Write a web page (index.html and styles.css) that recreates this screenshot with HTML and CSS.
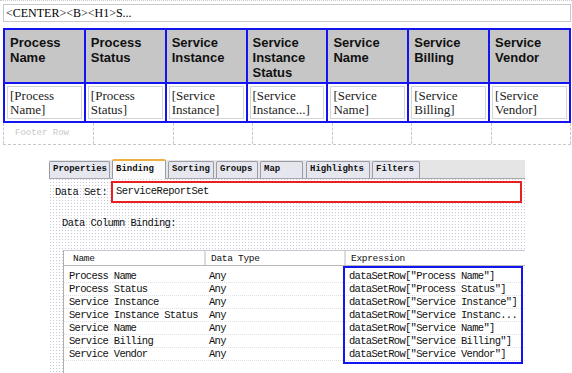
FILE: index.html
```html
<!DOCTYPE html>
<html lang="en">
  <head>
    <meta charset="UTF-8" />
    <title>Report Binding</title>
    <link rel="stylesheet" href="styles.css">
  </head>
  <body>
    <div class="layout">
      <div class="topbar">&lt;CENTER&gt;&lt;B&gt;&lt;H1&gt;S...</div>

      <table class="report">
        <tr class="head">
          <th>Process Name</th>
          <th>Process Status</th>
          <th>Service Instance</th>
          <th>Service Instance Status</th>
          <th>Service Name</th>
          <th>Service Billing</th>
          <th>Service Vendor</th>
        </tr>
        <tr class="data">
          <td><span>[Process Name]</span></td>
          <td><span>[Process Status]</span></td>
          <td><span>[Service Instance]</span></td>
          <td><span>[Service Instance...]</span></td>
          <td><span>[Service Name]</span></td>
          <td><span>[Service Billing]</span></td>
          <td><span>[Service Vendor]</span></td>
        </tr>
      </table>
      <div class="footer">
        <div class="fcell first">Footer Row</div>
        <div class="fcell"></div>
        <div class="fcell"></div>
        <div class="fcell"></div>
        <div class="fcell"></div>
        <div class="fcell"></div>
        <div class="fcell"></div>
      </div>

      <div class="panel">
        <div class="tabs">
          <div class="tab t-prop">Properties</div>
          <div class="tab active t-bind">Binding</div>
          <div class="tab t-sort">Sorting</div>
          <div class="tab t-group">Groups</div>
          <div class="tab t-map">Map</div>
          <div class="tab t-high">Highlights</div>
          <div class="tab t-filt">Filters</div>
        </div>

        <div class="dataset">
          <label>Data Set:</label>
          <div class="field">ServiceReportSet</div>
        </div>

        <div class="subtitle">Data Column Binding:</div>

        <div class="grid">
          <div class="grow ghead">
            <div class="c1">Name</div>
            <div class="c2">Data Type</div>
            <div class="c3">Expression</div>
          </div>
          <div class="gbody">
            <div class="grow"><div class="c1">Process Name</div><div class="c2">Any</div><div class="c3">dataSetRow["Process Name"]</div></div>
            <div class="grow"><div class="c1">Process Status</div><div class="c2">Any</div><div class="c3">dataSetRow["Process Status"]</div></div>
            <div class="grow"><div class="c1">Service Instance</div><div class="c2">Any</div><div class="c3">dataSetRow["Service Instance"]</div></div>
            <div class="grow"><div class="c1">Service Instance Status</div><div class="c2">Any</div><div class="c3">dataSetRow["Service Instanc...</div></div>
            <div class="grow"><div class="c1">Service Name</div><div class="c2">Any</div><div class="c3">dataSetRow["Service Name"]</div></div>
            <div class="grow"><div class="c1">Service Billing</div><div class="c2">Any</div><div class="c3">dataSetRow["Service Billing"]</div></div>
            <div class="grow"><div class="c1">Service Vendor</div><div class="c2">Any</div><div class="c3">dataSetRow["Service Vendor"]</div></div>
            <div class="exprbox"></div>
          </div>
        </div>
      </div>
    </div>
  </body>
</html>
```

FILE: styles.css
```css
* {
  padding: 0;
  margin: 0;
  box-sizing: border-box;
}
body {
  background: #fff;
  width: 572px;
  height: 373px;
  overflow: hidden;
}
.layout {
  padding: 3px 1px 0 3px;
  border-top: 1px dotted #c8c8c8;
}
.topbar {
  height: 18px;
  border: 1px solid #c8c8c8;
  font-family: "Liberation Serif", serif;
  font-size: 12px;
  line-height: 16px;
  padding-left: 2px;
  color: #000;
}
.report {
  margin-top: 6px;
  width: 568px;
  border-collapse: collapse;
  table-layout: fixed;
}
.report th,
.report td {
  border: 2px solid #1414f0;
  vertical-align: top;
  text-align: left;
}
.report th {
  height: 54px;
  background: #c6c6c6;
  font-family: "Liberation Sans", sans-serif;
  font-weight: bold;
  font-size: 13px;
  line-height: 15px;
  padding: 5px 4px 0 5px;
  color: #111;
}
.report td {
  height: 39px;
  padding: 2px;
}
.report td span {
  display: block;
  height: 33px;
  border: 1px solid #d4d4d4;
  font-family: "Liberation Serif", serif;
  font-size: 13px;
  line-height: 14px;
  padding: 2px 0 0 2px;
  color: #222;
}
.footer {
  display: flex;
  height: 22px;
  border-bottom: 1px dashed #c8c8c8;
}
.fcell {
  flex: 1;
  border-left: 1px dashed #c8c8c8;
}
.fcell:last-child {
  border-right: 1px dashed #c8c8c8;
}
.fcell.first {
  font-family: "Liberation Mono", monospace;
  font-size: 9px;
  color: #c8c8c8;
  padding: 5px 0 0 11px;
}

.panel {
  margin: 15px 0 0 46px;
  width: 476px;
  height: 220px;
  font-family: "Liberation Mono", "Noto Sans CJK SC", monospace;
  font-size: 9px;
  color: #111;
  background-color: #fff;
  background-image: radial-gradient(#c8c8dc 0.6px, transparent 0.8px);
  background-size: 3px 3px;
}
.tabs {
  display: flex;
  height: 19px;
  padding-top: 2px;
  background-color: #d8d8d8;
  background-image: radial-gradient(#f4f4f4 0.6px, transparent 0.8px);
  background-size: 2px 2px;
  border-bottom: 1px solid #a8a8a8;
  align-items: flex-end;
}
.tab {
  height: 17px;
  line-height: 15px;
  padding: 0 3px;
  margin-right: 2px;
  background: #e6e6ee;
  border: 1px solid #9a9aa8;
  border-bottom: none;
  border-radius: 2px 2px 0 0;
  font-weight: bold;
}
.tab.active {
  height: 20px;
  background: #fafafa;
  border-top: 2px solid #f0b040;
  line-height: 17px;
  margin-bottom: -1px;
}
.t-prop { width: 61px; }
.t-bind { width: 54px; }
.t-sort { width: 46px; }
.t-group { width: 42px; }
.t-map { width: 43px; margin-right: 3px; }
.t-high { width: 64px; }
.t-filt { width: 48px; }
.dataset {
  display: flex;
  align-items: center;
  margin-top: 2px;
  height: 22px;
}
.dataset label {
  width: 62px;
  padding-left: 6px;
  font-size: 10.5px;
  letter-spacing: -0.5px;
}
.field {
  width: 411px;
  height: 22px;
  border: 2px solid #e82020;
  background: #fff;
  font-size: 10.5px;
  letter-spacing: -0.5px;
  line-height: 17px;
  padding-left: 3px;
}
.subtitle {
  margin: 14px 0 0 13px;
  font-size: 10.5px;
  letter-spacing: -0.6px;
}
.grid {
  margin: 21px 0 0 14px;
  height: 130px;
  border-left: 1px solid #b0b0b0;
  border-top: 1px solid #c8c8d0;
  background: #fff;
}
.grow {
  display: flex;
  height: 13px;
  line-height: 13px;
  font-size: 10.5px;
  letter-spacing: -0.7px;
}
.ghead {
  height: 15px;
  line-height: 15px;
  border-bottom: 1px solid #b8b8b8;
  font-size: 9.5px;
  letter-spacing: -0.3px;
}
.ghead .c1 { padding-left: 9px; }
.ghead .c2,
.ghead .c3 {
  border-left: 2px solid #dcdcdc;
}
.c1 {
  width: 140px;
  padding-left: 5px;
}
.c2 {
  width: 140px;
  padding-left: 5px;
}
.c3 {
  flex: 1;
  padding-left: 5px;
  white-space: nowrap;
}
.gbody {
  position: relative;
  padding-top: 4px;
}
.gbody .grow {
  border-bottom: 1px dotted #e0e0e8;
}
.exprbox {
  position: absolute;
  left: 279px;
  top: 0;
  width: 180px;
  height: 98px;
  border: 2px solid #1414f0;
}
```
